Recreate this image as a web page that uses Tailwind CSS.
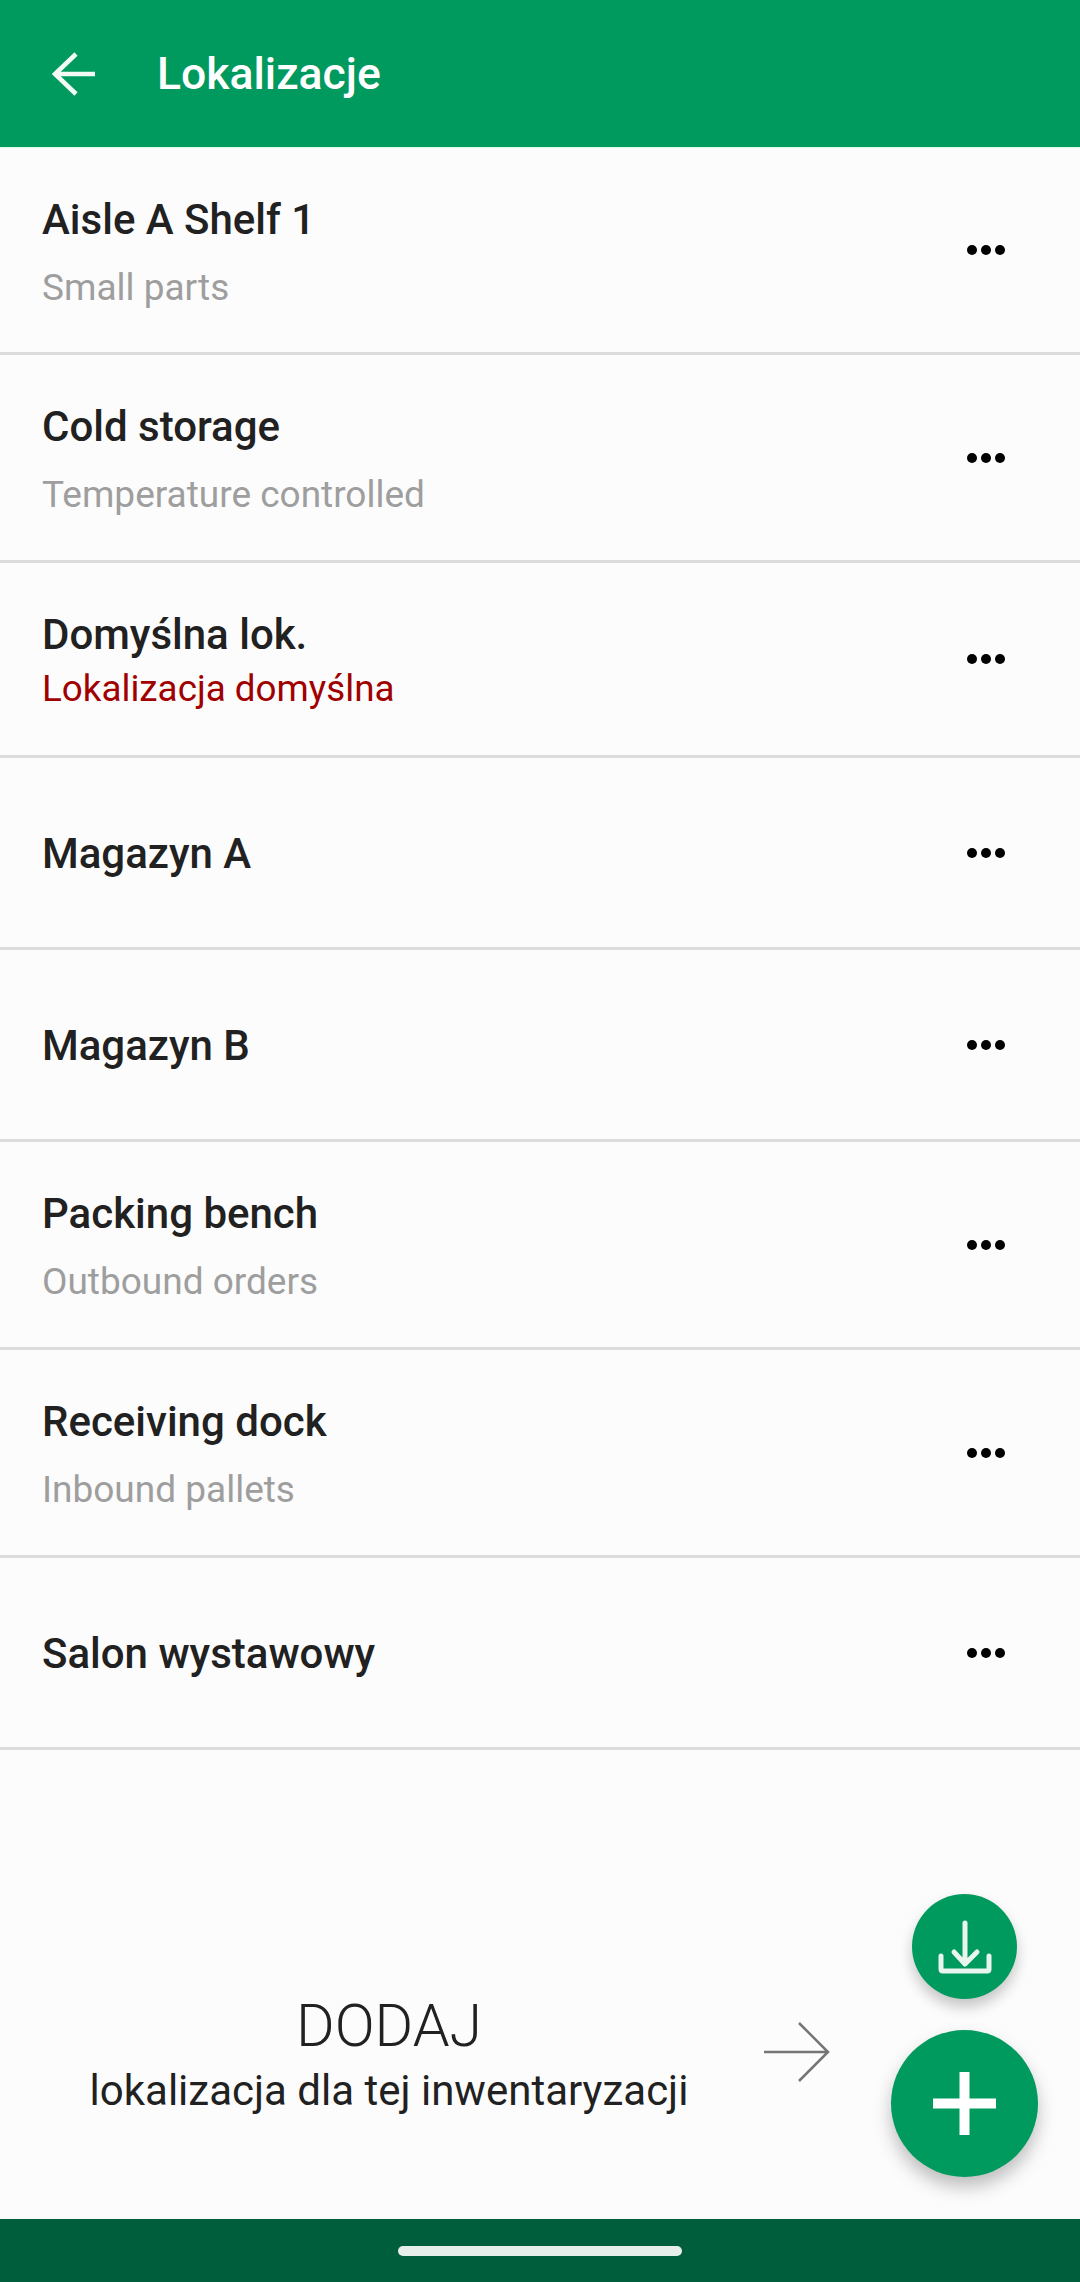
<!DOCTYPE html>
<html lang="pl">
<head>
<meta charset="utf-8">
<title>Lokalizacje</title>
<script src="https://cdn.jsdelivr.net/npm/@tailwindcss/browser@4"></script>
</head>
<body class="font-['Roboto',sans-serif] bg-[#fcfcfc]">
<div class="relative flex h-[2282px] w-[1080px] flex-col overflow-hidden bg-[#fcfcfc]">

    <!-- App bar -->
    <header class="flex h-[147px] shrink-0 items-center bg-[#009a5e] pl-[52px]">
        <svg class="h-[44px] w-[44px]" viewBox="0 0 44 44" fill="none" stroke="#f4fbf7" stroke-width="4.5">
            <path d="M2 22H43M24 2L3 22L24 42"/>
        </svg>
        <h1 class="ml-[61px] pt-[2px] text-[44.5px] font-medium leading-none text-white">Lokalizacje</h1>
    </header>

    <!-- Locations -->
    <ul class="shrink-0">
        <li class="flex h-[208px] items-center justify-between border-t border-b-[3px] border-t-[#d8fbec] border-b-[#dcdcdc] pl-[42px] pr-[75px]">
            <div class="pt-[5px]">
                <p class="text-[42px] font-medium leading-[46px] text-[#212121]">Aisle A Shelf 1</p>
                <p class="mt-[24px] text-[37px] leading-[42px] text-[#9e9e9e]">Small parts</p>
            </div>
            <div class="flex gap-[4px]"><span class="h-[10px] w-[10px] rounded-full bg-black"></span><span class="h-[10px] w-[10px] rounded-full bg-black"></span><span class="h-[10px] w-[10px] rounded-full bg-black"></span></div>
        </li>
        <li class="flex h-[208px] items-center justify-between border-b-[3px] border-[#dcdcdc] pl-[42px] pr-[75px]">
            <div class="pt-[5px]">
                <p class="text-[42px] font-medium leading-[46px] text-[#212121]">Cold storage</p>
                <p class="mt-[24px] text-[37px] leading-[42px] text-[#9e9e9e]">Temperature controlled</p>
            </div>
            <div class="flex gap-[4px]"><span class="h-[10px] w-[10px] rounded-full bg-black"></span><span class="h-[10px] w-[10px] rounded-full bg-black"></span><span class="h-[10px] w-[10px] rounded-full bg-black"></span></div>
        </li>
        <li class="flex h-[195px] items-center justify-between border-b-[3px] border-[#dcdcdc] pl-[42px] pr-[75px]">
            <div class="pt-[4px]">
                <p class="text-[42px] font-medium leading-[46px] text-[#212121]">Domyślna lok.</p>
                <p class="mt-[10px] text-[36.8px] leading-[42px] text-[#a00000]">Lokalizacja domyślna</p>
            </div>
            <div class="flex gap-[4px]"><span class="h-[10px] w-[10px] rounded-full bg-black"></span><span class="h-[10px] w-[10px] rounded-full bg-black"></span><span class="h-[10px] w-[10px] rounded-full bg-black"></span></div>
        </li>
        <li class="flex h-[192px] items-center justify-between border-b-[3px] border-[#dcdcdc] pl-[42px] pr-[75px]">
            <p class="pt-[3px] text-[42px] font-medium leading-[46px] text-[#212121]">Magazyn A</p>
            <div class="flex gap-[4px]"><span class="h-[10px] w-[10px] rounded-full bg-black"></span><span class="h-[10px] w-[10px] rounded-full bg-black"></span><span class="h-[10px] w-[10px] rounded-full bg-black"></span></div>
        </li>
        <li class="flex h-[192px] items-center justify-between border-b-[3px] border-[#dcdcdc] pl-[42px] pr-[75px]">
            <p class="pt-[3px] text-[42px] font-medium leading-[46px] text-[#212121]">Magazyn B</p>
            <div class="flex gap-[4px]"><span class="h-[10px] w-[10px] rounded-full bg-black"></span><span class="h-[10px] w-[10px] rounded-full bg-black"></span><span class="h-[10px] w-[10px] rounded-full bg-black"></span></div>
        </li>
        <li class="flex h-[208px] items-center justify-between border-b-[3px] border-[#dcdcdc] pl-[42px] pr-[75px]">
            <div class="pt-[5px]">
                <p class="text-[42px] font-medium leading-[46px] text-[#212121]">Packing bench</p>
                <p class="mt-[24px] text-[37px] leading-[42px] text-[#9e9e9e]">Outbound orders</p>
            </div>
            <div class="flex gap-[4px]"><span class="h-[10px] w-[10px] rounded-full bg-black"></span><span class="h-[10px] w-[10px] rounded-full bg-black"></span><span class="h-[10px] w-[10px] rounded-full bg-black"></span></div>
        </li>
        <li class="flex h-[208px] items-center justify-between border-b-[3px] border-[#dcdcdc] pl-[42px] pr-[75px]">
            <div class="pt-[5px]">
                <p class="text-[42px] font-medium leading-[46px] text-[#212121]">Receiving dock</p>
                <p class="mt-[24px] text-[37px] leading-[42px] text-[#9e9e9e]">Inbound pallets</p>
            </div>
            <div class="flex gap-[4px]"><span class="h-[10px] w-[10px] rounded-full bg-black"></span><span class="h-[10px] w-[10px] rounded-full bg-black"></span><span class="h-[10px] w-[10px] rounded-full bg-black"></span></div>
        </li>
        <li class="flex h-[192px] items-center justify-between border-b-[3px] border-[#dcdcdc] pl-[42px] pr-[75px]">
            <p class="pt-[3px] text-[42px] font-medium leading-[46px] text-[#212121]">Salon wystawowy</p>
            <div class="flex gap-[4px]"><span class="h-[10px] w-[10px] rounded-full bg-black"></span><span class="h-[10px] w-[10px] rounded-full bg-black"></span><span class="h-[10px] w-[10px] rounded-full bg-black"></span></div>
        </li>
    </ul>

    <!-- Add hint -->
    <section class="flex flex-1 items-start pt-[242px]">
        <div class="w-[778px] text-center text-[#212121]">
            <p class="text-[59px] font-light leading-[68px]">DODAJ</p>
            <p class="mt-[7px] text-[42px] leading-[48px]">lokalizacja dla tej inwentaryzacji</p>
        </div>
        <svg class="mt-[30px] h-[60px] w-[66px] shrink-0 -translate-x-[14px]" viewBox="0 0 66 60" fill="none" stroke="#757575" stroke-width="2.5">
            <path d="M0 30H64M35 1L64 30L35 59"/>
        </svg>
    </section>

    <!-- Nav bar -->
    <div class="flex h-[63px] shrink-0 justify-center bg-[#005e3c] pt-[27px]">
        <div class="h-[10px] w-[284px] rounded-full bg-[#e6efea]"></div>
    </div>

    <!-- Floating buttons -->
    <button class="absolute left-[912px] top-[1894px] flex h-[105px] w-[105px] items-center justify-center rounded-full bg-[#009a5e] shadow-[0_8px_14px_rgba(0,0,0,0.22)]">
        <svg class="h-[60px] w-[60px]" viewBox="0 0 60 60" fill="none" stroke="#e8f6ef" stroke-width="5" stroke-linecap="round" stroke-linejoin="round">
            <path d="M30 6V47M19 35L30 47L42 35"/>
            <path d="M6 39V52Q6 54 8 54H52Q54 54 54 52V39"/>
        </svg>
    </button>
    <button class="absolute left-[891px] top-[2030px] flex h-[147px] w-[147px] items-center justify-center rounded-full bg-[#009a5e] shadow-[0_10px_18px_rgba(0,0,0,0.25)]">
        <svg class="h-[63px] w-[63px]" viewBox="0 0 63 63" fill="#ffffff">
            <path d="M26.5 0H36.5V26.5H63V36.5H36.5V63H26.5V36.5H0V26.5H26.5Z"/>
        </svg>
    </button>
</div>
</body>
</html>
